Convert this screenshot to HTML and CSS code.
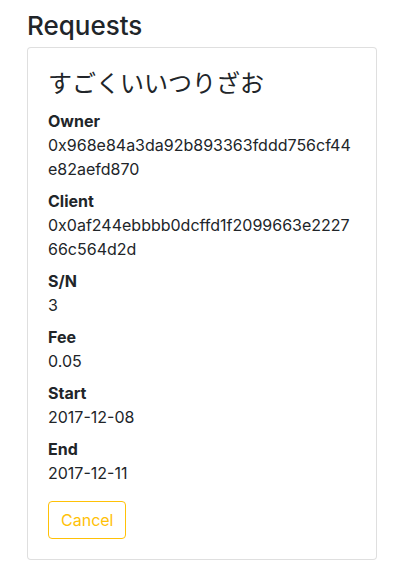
FILE: index.html
```html
<!DOCTYPE html>
<html lang="ja">
<head>
<meta charset="utf-8">
<title>Requests</title>
<link rel="stylesheet" href="styles.css">
</head>
<body>
<div class="container">
  <h2 class="page-title">Requests</h2>
  <div class="card">
    <div class="card-body">
      <h4 class="card-title">すごくいいつりざお</h4>
      <dl class="details">
        <dt>Owner</dt>
        <dd class="hash">0x968e84a3da92b893363fddd756cf44e82aefd870</dd>
        <dt>Client</dt>
        <dd class="hash">0x0af244ebbbb0dcffd1f2099663e222766c564d2d</dd>
        <dt>S/N</dt>
        <dd>3</dd>
        <dt>Fee</dt>
        <dd>0.05</dd>
        <dt>Start</dt>
        <dd>2017-12-08</dd>
        <dt>End</dt>
        <dd>2017-12-11</dd>
      </dl>
      <button class="btn btn-outline-warning" type="button">Cancel</button>
    </div>
  </div>
</div>
</body>
</html>
```

FILE: styles.css
```css
* { box-sizing: border-box; }
html, body { margin: 0; padding: 0; background: #fff; }
body {
  font-family: Inter, "Noto Sans CJK JP", sans-serif;
  font-size: 16px;
  line-height: 1.5;
  color: #212529;
}
.container {
  padding: 10px 25px 0 27px;
}
.page-title {
  margin: 0 0 6px;
  font-size: 26px;
  font-weight: 500;
  line-height: 1.2;
}
.card {
  border: 1px solid rgba(0,0,0,.125);
  border-radius: 4px;
  background: #fff;
  width: 350px;
}
.card-body {
  padding: 20px;
}
.card-title {
  margin: 0 0 12px;
  font-family: "Noto Sans CJK JP", sans-serif;
  font-size: 24px;
  font-weight: 400;
  line-height: 1.2;
}
.details {
  margin: 0 0 16px;
}
.details dt {
  font-weight: 700;
}
.details dd {
  margin: 0 0 8px;
}
.hash {
  word-break: break-all;
}
.btn {
  display: inline-block;
  font-family: inherit;
  font-size: 16px;
  line-height: 24px;
  padding: 6px 12px;
  border-radius: 4px;
  background: transparent;
  cursor: pointer;
}
.btn-outline-warning {
  color: #ffc107;
  border: 1px solid #ffc107;
}
```
